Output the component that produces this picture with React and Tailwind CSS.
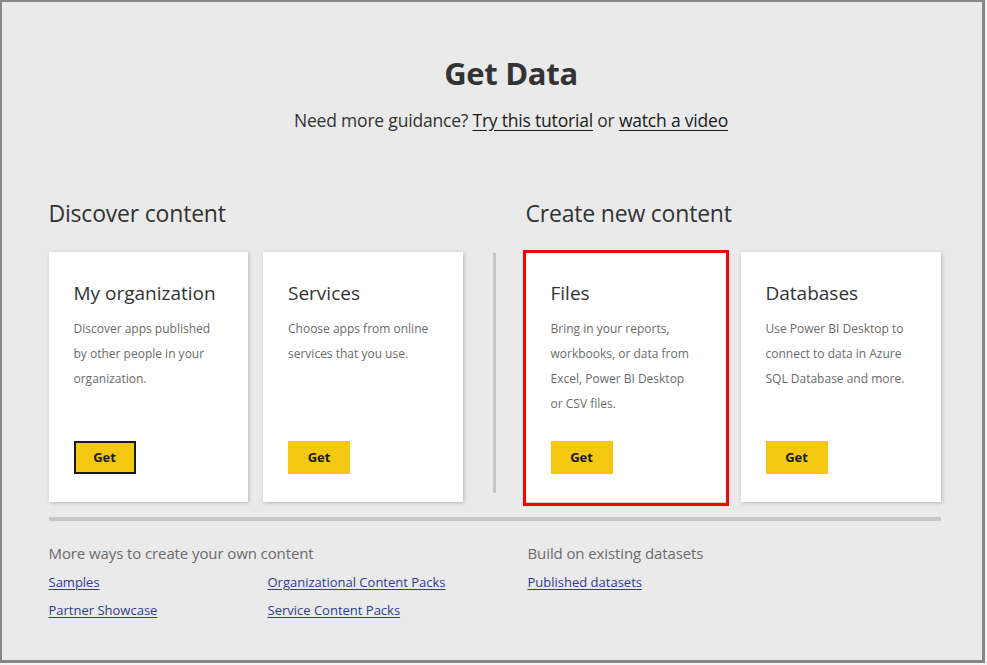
import React from "react";

const font = { fontFamily: '"Open Sans", "Noto Sans", sans-serif' };

function Card({ title, desc, outlined }) {
  return (
    <div className="w-[200px] h-[250px] bg-white shadow-[1px_1px_4px_rgba(0,0,0,0.22)] flex flex-col px-[25px] pt-[28px] pb-[28px]">
      <div className="text-[19px] leading-[26px] text-[#333333]">{title}</div>
      <div className="mt-[10px] text-[12px] leading-[25px] text-[#6b6b6b]">{desc}</div>
      <div className="mt-auto">
        <button
          className={
            "w-[62px] h-[33px] bg-[#f2c811] text-[13px] font-bold text-[#1a1a1a] " +
            (outlined ? "border-2 border-[#1a1a1a]" : "border-0")
          }
        >
          Get
        </button>
      </div>
    </div>
  );
}

export default function App() {
  return (
    <div className="w-[987px] h-[665px] bg-[#f4f4f4]" style={font}>
      <div className="w-[985px] h-[663px] border-l-2 border-t-2 border-r-[3px] border-b-[3px] border-[#878787] bg-[#eaeaea] flex flex-col items-center">
        <h1 className="mt-[49px] ml-[38px] text-[31px] leading-[44px] font-bold text-[#333333] tracking-[-0.3px]">Get Data</h1>
        <p className="mt-[13px] ml-[38px] text-[17.5px] leading-[24px] text-[#333333] tracking-[-0.2px]">
          Need more guidance? <span className="underline underline-offset-[3px] text-[#1a1a1a]">Try this tutorial</span> or{" "}
          <span className="underline underline-offset-[3px] text-[#1a1a1a]">watch a video</span>
        </p>

        <div className="mt-[65px] w-[892px] ml-[5px] flex">
          <div className="w-[414px]">
            <div className="text-[23px] leading-[32px] text-[#333333] tracking-[-0.2px]">Discover content</div>
            <div className="mt-[23px] flex gap-[15px]">
              <Card
                title="My organization"
                desc={<>Discover apps published<br />by other people in your<br />organization.</>}
                outlined
              />
              <Card title="Services" desc={<>Choose apps from online<br />services that you use.</>} />
            </div>
          </div>
          <div className="w-[30px]" />
          <div className="mt-[56px] w-[3px] h-[240px] bg-[#c6c6c6]" />
          <div className="w-[30px]" />
          <div className="w-[415px]">
            <div className="text-[23px] leading-[32px] text-[#333333] tracking-[-0.2px]">Create new content</div>
            <div className="mt-[23px] flex gap-[15px]">
              <div className="relative">
                <Card
                  title="Files"
                  desc={<>Bring in your reports,<br />workbooks, or data from<br />Excel, Power BI Desktop<br />or CSV files.</>}
                />
                <div className="absolute -left-[3px] -top-[2px] -right-[3px] -bottom-[4px] border-[3px] border-[#ff0000] pointer-events-none" />
              </div>
              <Card
                title="Databases"
                desc={<>Use Power BI Desktop to<br />connect to data in Azure<br />SQL Database and more.</>}
              />
            </div>
          </div>
        </div>

        <div className="mt-[15px] w-[892px] ml-[5px] h-[4px] bg-[#c6c6c6]" />

        <div className="mt-[22px] w-[892px] ml-[5px] flex">
          <div className="w-[479px]">
            <div className="text-[15px] leading-[20px] text-[#6b6b6b] tracking-[-0.1px]">More ways to create your own content</div>
            <div className="mt-[9px] grid grid-cols-[219px_1fr] gap-y-[8px] text-[13px] leading-[20px] text-[#2f3c8e]">
              <a className="underline underline-offset-2 w-fit">Samples</a>
              <a className="underline underline-offset-2 w-fit">Organizational Content Packs</a>
              <a className="underline underline-offset-2 w-fit">Partner Showcase</a>
              <a className="underline underline-offset-2 w-fit">Service Content Packs</a>
            </div>
          </div>
          <div>
            <div className="text-[15px] leading-[20px] text-[#6b6b6b] tracking-[-0.1px]">Build on existing datasets</div>
            <div className="mt-[9px] text-[13px] leading-[20px] text-[#2f3c8e]">
              <a className="underline underline-offset-2">Published datasets</a>
            </div>
          </div>
        </div>
      </div>
    </div>
  );
}
